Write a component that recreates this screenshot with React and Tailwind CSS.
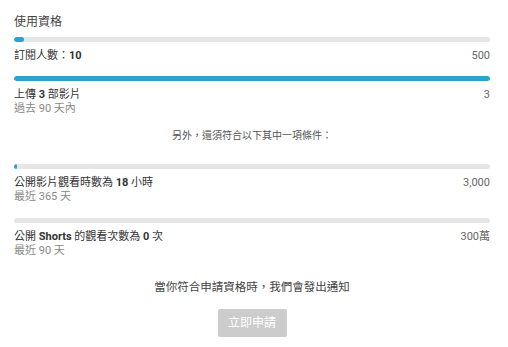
import React from 'react';

const font = {fontFamily: 'Roboto, "Noto Sans CJK TC", sans-serif'};

const Bar = ({pct, className = ''}) => (
    <div className={`h-[5px] w-full rounded-full bg-[#e6e6e6] overflow-hidden ${className}`}>
        <div className="h-full rounded-full bg-[#2ba3cd]" style={{width: `${pct}%`}}/>
    </div>
);

const Row = ({label, value, sub}) => (
    <div className="mt-[7px]">
        <div className="flex items-center justify-between h-[14px] leading-[14px] text-[11px]">
            <span className="text-[#333]">{label}</span>
            <span className="text-[#666]">{value}</span>
        </div>
        {sub && <div className="h-[14px] leading-[14px] text-[11px] text-[#888]">{sub}</div>}
    </div>
);

export default function App() {
    return (
        <div lang="zh-Hant-TW" className="w-[508px] h-[347px] bg-white pl-[14px] pr-[18px] pt-[14px]" style={font}>
            <div className="h-[16px] leading-[16px] text-[12px] text-[#444]">使用資格</div>
            <Bar pct={2} className="mt-[7px]"/>
            <Row label={<>訂閱人數：<b className="font-bold">10</b></>} value="500"/>
            <Bar pct={100} className="mt-[13px]"/>
            <Row label={<>上傳 <b className="font-bold">3</b> 部影片</>} value="3" sub="過去 90 天內"/>
            <div className="mt-[13px] h-[14px] leading-[14px] text-center text-[10px] text-[#555]">另外，還須符合以下其中一項條件：</div>
            <Bar pct={0.6} className="mt-[21px]"/>
            <Row label={<>公開影片觀看時數為 <b className="font-bold">18</b> 小時</>} value="3,000" sub="最近 365 天"/>
            <Bar pct={0} className="mt-[14px]"/>
            <Row label={<>公開 <b className="font-bold">Shorts</b> 的觀看次數為 <b className="font-bold">0</b> 次</>} value="300萬" sub="最近 90 天"/>
            <div className="mt-[21px] h-[16px] leading-[16px] text-center text-[11.5px] text-[#444]">當你符合申請資格時，我們會發出通知</div>
            <div className="mt-[14px] flex justify-center">
                <button disabled className="w-[69px] h-[28px] rounded-[2px] bg-[#cccccc] text-white text-[12px]">立即申請</button>
            </div>
        </div>
    );
}
